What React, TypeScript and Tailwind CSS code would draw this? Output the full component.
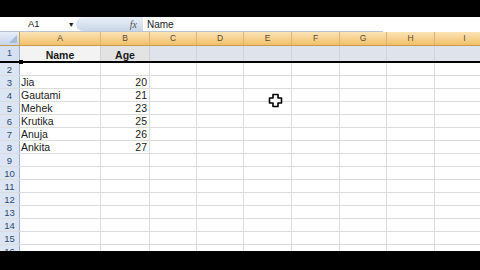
import React from 'react';

const cols = [
  { id: 'A', w: 81 },
  { id: 'B', w: 49 },
  { id: 'C', w: 47 },
  { id: 'D', w: 47 },
  { id: 'E', w: 48 },
  { id: 'F', w: 48 },
  { id: 'G', w: 47 },
  { id: 'H', w: 48 },
  { id: 'I', w: 60 },
];

const data: Record<number, [string, string]> = {
  3: ['Jia', '20'],
  4: ['Gautami', '21'],
  5: ['Mehek', '23'],
  6: ['Krutika', '25'],
  7: ['Anuja', '26'],
  8: ['Ankita', '27'],
};

const rows = [2, 3, 4, 5, 6, 7, 8, 9, 10, 11, 12, 13, 14, 15, 16];

function Cursor() {
  return (
    <svg className="absolute left-[268px] top-[93px]" width="15" height="15" viewBox="0 0 15 15">
      <path
        d="M5 1.5h5v3.5h3.5v5h-3.5v3.5h-5v-3.5h-3.5v-5h3.5z"
        fill="#fff"
        stroke="#000"
        strokeWidth="1.6"
        strokeLinejoin="round"
      />
    </svg>
  );
}

export default function App() {
  return (
    <div className="relative h-[270px] w-[480px] overflow-hidden bg-black font-['Liberation_Sans',Arial,sans-serif] text-[10.5px] text-[#1b1b1b]">
      <div className="h-[17px]" />

      {/* Formula bar */}
      <div className="flex h-[15px] bg-white">
        <div className="flex w-[383px] items-center border-b border-[#b9c4d4]">
          <div className="flex w-[76px] items-center">
            <span className="ml-[28px] text-[9.5px]">A1</span>
            <span className="ml-[28px] text-[7px] leading-none">▼</span>
          </div>
          <div className="flex h-full w-[67px] items-center justify-end rounded-l-[7px] bg-gradient-to-b from-[#e9eff8] to-[#c9d6e8] pr-[6px]">
            <span className="font-['Liberation_Serif',serif] text-[10px] italic text-[#555]">fx</span>
          </div>
          <span className="ml-[4px] text-[10px]">Name</span>
        </div>
      </div>

      {/* Column headers */}
      <div className="flex h-[14px] border-b border-[#c79a4f] bg-gradient-to-b from-[#fbe3b6] to-[#f1c068]">
        <div className="relative w-[20px] shrink-0 border-r border-[#c9a060] bg-gradient-to-b from-[#e6eef9] to-[#c5d5ea]">
          <div className="absolute bottom-[2px] right-[2px] h-0 w-0 border-b-[8px] border-l-[8px] border-b-[#a9bcd6] border-l-transparent" />
        </div>
        {cols.map((c) => (
          <div
            key={c.id}
            style={{ width: c.w }}
            className="flex shrink-0 items-center justify-center border-r border-[#d8b779] text-[8.5px] text-[#5a4a2e]"
          >
            {c.id}
          </div>
        ))}
      </div>

      {/* Row 1 */}
      <div className="flex h-[17px] border-b-2 border-black bg-[#dfe4ec] leading-none">
        <div className="flex w-[20px] shrink-0 items-center justify-center border-r border-[#9fb2cf] bg-[#d5e1f1] text-[9px] text-[#2f4a74]">
          1
        </div>
        <div className="flex w-[81px] shrink-0 items-end justify-center border-r border-[#d0d0d0] bg-[#f3f3f3] pb-[1px] font-bold">
          Name
        </div>
        <div className="flex w-[49px] shrink-0 items-end justify-center border-r border-[#d0d0d0] bg-[#e3e3e3] pb-[1px] font-bold">
          Age
        </div>
        {cols.slice(2).map((c) => (
          <div key={c.id} style={{ width: c.w }} className="shrink-0 border-r border-[#cfd5df]" />
        ))}
      </div>

      {/* Rows */}
      {rows.map((r) => (
        <div key={r} className="flex h-[13px] border-b border-[#dadcdd] bg-white leading-none">
          <div className="flex w-[20px] shrink-0 items-center justify-center border-r border-[#9fb2cf] bg-[#dbe5f3] pt-[1px] text-[9.5px] text-[#2f4a74]">
            {r}
          </div>
          <div className="flex w-[81px] shrink-0 items-center border-r border-[#dadcdd] pl-[1px] pt-[1px]">
            {data[r]?.[0]}
          </div>
          <div className="flex w-[49px] shrink-0 items-center justify-end border-r border-[#dadcdd] pr-[2px] pt-[1px]">
            {data[r]?.[1]}
          </div>
          {cols.slice(2).map((c) => (
            <div key={c.id} style={{ width: c.w }} className="shrink-0 border-r border-[#dadcdd]" />
          ))}
        </div>
      ))}

      <div className="absolute left-0 top-[251px] h-[19px] w-full bg-black" />
      <div className="absolute left-[19px] top-[60px] h-[4px] w-[4px] bg-black" />
      <Cursor />
    </div>
  );
}
